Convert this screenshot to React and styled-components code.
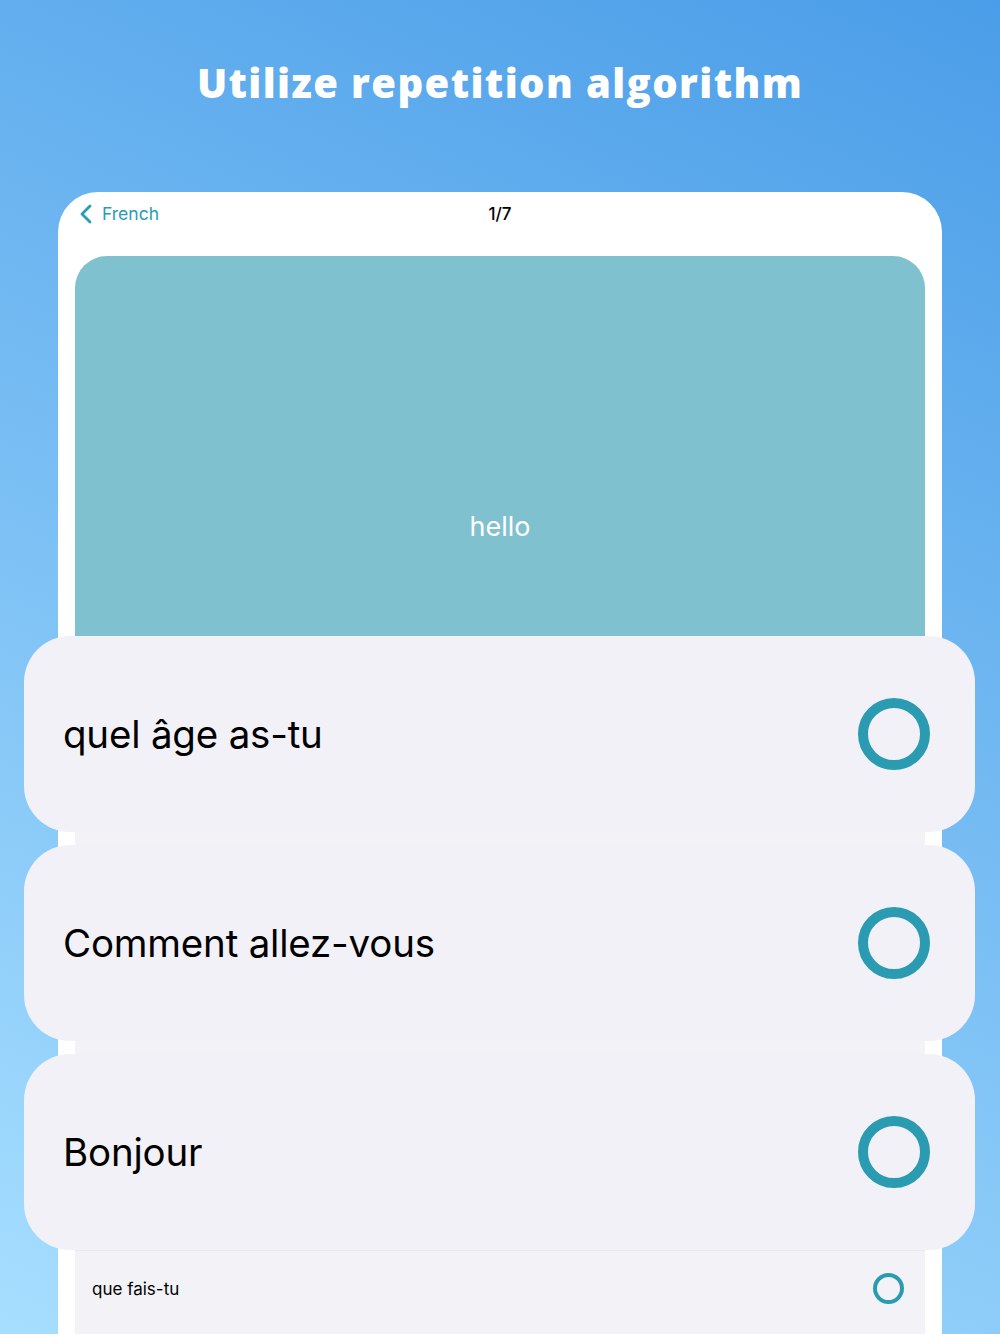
import React from "react";
import styled, { createGlobalStyle } from "styled-components";

// Global page reset
const GlobalStyle = createGlobalStyle`
  html, body {
    margin: 0;
    padding: 0;
  }
  body {
    font-family: "Inter", "Liberation Sans", sans-serif;
    -webkit-font-smoothing: antialiased;
  }
`;

const answers = ["quel âge as-tu", "Comment allez-vous", "Bonjour"];

// Define page background
const Page = styled.div`
  width: 1000px;
  height: 1334px;
  overflow: hidden;
  display: flex;
  flex-direction: column;
  background: linear-gradient(25deg, #a6deff 0%, #4a9de8 100%);
`;

// Define headline area
const Header = styled.header`
  height: 192px;
  display: flex;
  justify-content: center;
  padding-top: 58px;
  box-sizing: border-box;
`;

const Title = styled.h1`
  margin: 0;
  font-family: "Open Sans", sans-serif;
  font-weight: 800;
  font-size: 40px;
  line-height: 50px;
  letter-spacing: 1.4px;
  color: #ffffff;
`;

// Define device frame
const Frame = styled.div`
  flex: 1;
  margin: 0 58px;
  padding: 0 17px;
  background: #ffffff;
  border-radius: 40px 40px 0 0;
  display: flex;
  flex-direction: column;
`;

const NavBar = styled.nav`
  height: 64px;
  display: grid;
  grid-template-columns: 1fr auto 1fr;
  align-items: flex-start;
  padding-top: 11px;
  box-sizing: border-box;
`;

const BackButton = styled.div`
  display: flex;
  align-items: center;
  gap: 10px;
  margin-left: 5px;
  color: #2a9db5;
  font-size: 17.5px;
  line-height: 22px;
`;

const Counter = styled.div`
  font-size: 17px;
  line-height: 22px;
  font-weight: 500;
  color: #000000;
`;

// Define flash card
const FlashCard = styled.div`
  height: 380px;
  flex-shrink: 0;
  background: #7fc1ce;
  border-radius: 32px 32px 0 0;
  display: flex;
  align-items: center;
  justify-content: center;
  padding-top: 160px;
  box-sizing: border-box;
  color: #ffffff;
  font-size: 27px;
`;

// Define answer list
const AnswerList = styled.div`
  flex: 1;
  background: #f2f2f7;
  display: flex;
  flex-direction: column;
  gap: 13px;
`;

const AnswerRow = styled.div`
  height: 196px;
  margin: 0 -50px 0 -51px;
  background: #f2f1f7;
  border-radius: 46px;
  display: flex;
  align-items: center;
  justify-content: space-between;
  padding: 0 45px 0 39px;
  box-sizing: border-box;
  font-size: 38.5px;
  letter-spacing: -0.2px;
  color: #000000;
`;

const SmallRow = styled.div`
  flex: 1;
  display: flex;
  align-items: center;
  justify-content: space-between;
  padding: 0 21px 8px 17px;
  margin-top: -13px;
  border-top: 1px solid #e9e9ef;
  font-size: 17px;
  color: #000000;
`;

const Ring = styled.span`
  width: ${(p) => p.size}px;
  height: ${(p) => p.size}px;
  border: ${(p) => p.stroke}px solid #2a9bb0;
  border-radius: 50%;
  box-sizing: border-box;
  flex-shrink: 0;
`;

const App = () => {
  return (
    <Page>
      <GlobalStyle />
      <Header>
        <Title>Utilize repetition algorithm</Title>
      </Header>
      <Frame>
        <NavBar>
          <BackButton>
            <svg width="12" height="20" viewBox="0 0 12 20">
              <path
                d="M10 2 L2 10 L10 18"
                fill="none"
                stroke="#2a9db5"
                strokeWidth="2.8"
                strokeLinecap="round"
                strokeLinejoin="round"
              />
            </svg>
            French
          </BackButton>
          <Counter>1/7</Counter>
        </NavBar>
        <FlashCard>hello</FlashCard>
        <AnswerList>
          {answers.map((a) => (
            <AnswerRow key={a}>
              {a}
              <Ring size={72} stroke={10} />
            </AnswerRow>
          ))}
          <SmallRow>
            que fais-tu
            <Ring size={31} stroke={4} />
          </SmallRow>
        </AnswerList>
      </Frame>
    </Page>
  );
};

export default App;
